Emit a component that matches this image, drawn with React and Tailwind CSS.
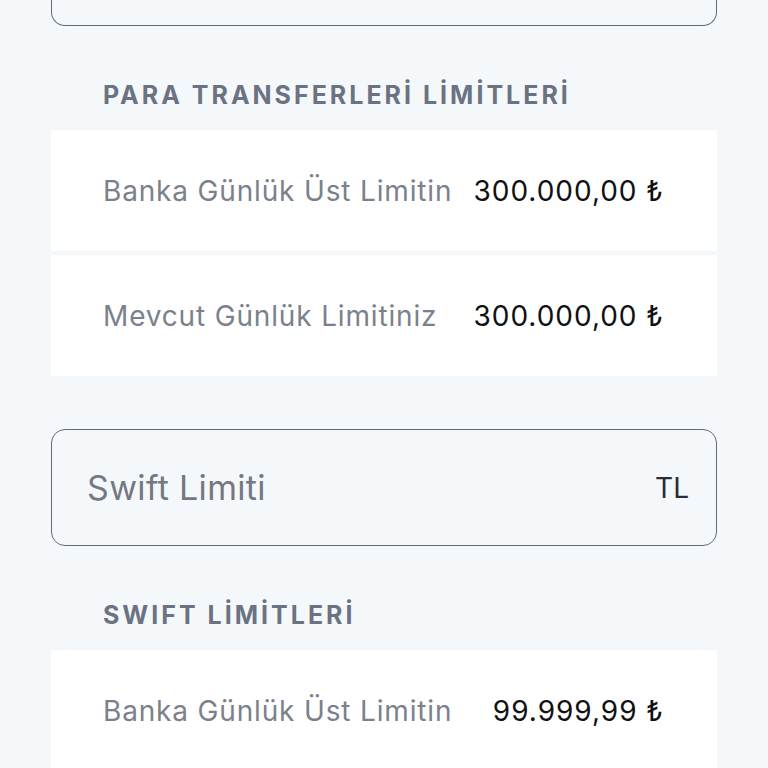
const sections = [
  {
    title: "PARA TRANSFERLERİ LİMİTLERİ",
    rows: [
      { label: "Banka Günlük Üst Limitin", value: "300.000,00 ₺" },
      { label: "Mevcut Günlük Limitiniz", value: "300.000,00 ₺" },
    ],
  },
];

const LimitRow = ({ label, value }) => (
  <div className="flex h-[121px] items-center justify-between bg-white pl-[52px] pr-[53px]">
    <span className="text-[28px] tracking-[0.03em] text-[#7b818b]">{label}</span>
    <span className="text-[28px] tracking-[0.035em] text-[#111111]">{value}</span>
  </div>
);

const SectionTitle = ({ children }) => (
  <div className="pl-[52px] pt-[55px] pb-[21px]">
    <p className="text-[25px] font-bold leading-[28px] tracking-[0.12em] text-[#6b7281]">{children}</p>
  </div>
);

const App = () => {
  return (
    <div
      className="min-h-[768px] w-[768px] overflow-hidden bg-[#f5f8fb] px-[51px]"
      style={{ fontFamily: "Inter, 'Noto Sans', sans-serif" }}
    >
      {/* cut off input above */}
      <div className="h-[26px] rounded-b-[14px] border-[1.75px] border-t-0 border-[#666b74]" />

      {sections.map((s) => (
        <div key={s.title}>
          <SectionTitle>{s.title}</SectionTitle>
          <div className="flex flex-col gap-[4px]">
            {s.rows.map((r) => (
              <LimitRow key={r.label} {...r} />
            ))}
          </div>
        </div>
      ))}

      {/* swift input */}
      <div className="mt-[53px] flex h-[117px] items-center justify-between rounded-[14px] border-[1.75px] border-[#666b74] pl-[35px] pr-[27px]">
        <span className="text-[34px] tracking-[0.01em] text-[#737882]">Swift Limiti</span>
        <span className="text-[28px] text-[#2a2d33]">TL</span>
      </div>

      <SectionTitle>SWIFT LİMİTLERİ</SectionTitle>
      <LimitRow label="Banka Günlük Üst Limitin" value="99.999,99 ₺" />
    </div>
  );
};

export default App;
